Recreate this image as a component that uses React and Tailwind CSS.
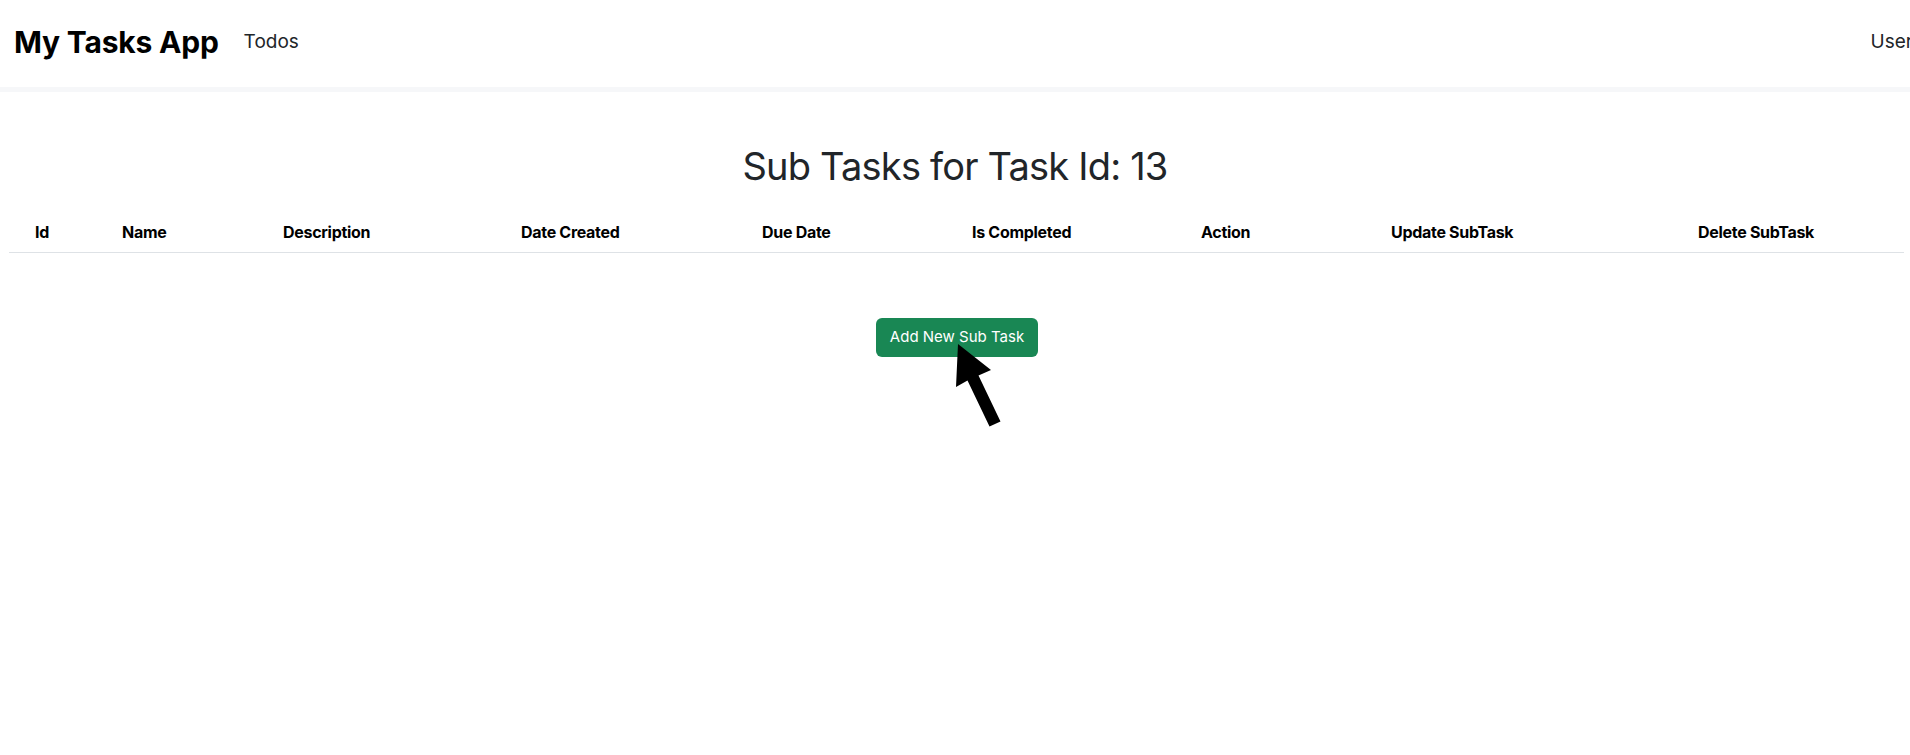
const columns = [
  { label: "Id", w: "w-[105px]", pad: "pl-[26px]" },
  { label: "Name", w: "w-[161px]", pad: "pl-[8px]" },
  { label: "Description", w: "w-[238px]", pad: "pl-[8px]" },
  { label: "Date Created", w: "w-[241px]", pad: "pl-[8px]" },
  { label: "Due Date", w: "w-[210px]", pad: "pl-[8px]" },
  { label: "Is Completed", w: "w-[229px]", pad: "pl-[8px]" },
  { label: "Action", w: "w-[190px]", pad: "pl-[8px]" },
  { label: "Update SubTask", w: "w-[307px]", pad: "pl-[8px]" },
  { label: "Delete SubTask", w: "w-[214px]", pad: "pl-[8px]" },
];

function Navbar() {
  return (
    <nav className="h-[87px] flex items-center bg-white border-b-[5px] border-[#f6f7f9] box-content">
      <a href="#" className="pl-[14px] mb-[2px] text-[30px] font-bold text-black tracking-[-0.2px]">
        My Tasks App
      </a>
      <a href="#" className="ml-[25px] mb-[3px] text-[19px] text-[#212529]">
        Todos
      </a>
      <a href="#" className="ml-auto mr-[-3px] mb-[3px] text-[19px] text-[#212529]">
        User
      </a>
    </nav>
  );
}

function Arrow() {
  return (
    <svg
      className="absolute left-[68px] top-[19px] pointer-events-none"
      width="70"
      height="100"
      viewBox="0 0 70 100"
    >
      <polygon
        points="14,7 47,33 34.5,38.5 56.5,84.5 45.5,89.5 23.5,43.5 12,50"
        fill="#000"
      />
    </svg>
  );
}

export default function App() {
  return (
    <div className="min-h-screen bg-white font-['Inter','Noto_Sans',sans-serif] text-[#212529]">
      <Navbar />
      <main>
        <h1 className="mt-[50px] text-center text-[38px] leading-[48px] font-normal tracking-[-0.8px]">
          Sub Tasks for Task Id: 13
        </h1>
        <div className="px-[9px] mt-[22px]">
          <table className="w-full border-collapse table-fixed">
            <thead>
              <tr className="border-b border-[#dee2e6]">
                {columns.map((c) => (
                  <th
                    key={c.label}
                    className={`${c.w} ${c.pad} h-[40px] text-left text-[16px] font-bold text-black tracking-[-0.3px]`}
                  >
                    {c.label}
                  </th>
                ))}
              </tr>
            </thead>
            <tbody></tbody>
          </table>
        </div>
        <div className="flex justify-center mt-[65px] ml-[4px]">
          <div className="relative">
            <button className="w-[162px] h-[39px] rounded-[6px] bg-[#198754] text-white text-[15px]">
              Add New Sub Task
            </button>
            <Arrow />
          </div>
        </div>
      </main>
    </div>
  );
}
